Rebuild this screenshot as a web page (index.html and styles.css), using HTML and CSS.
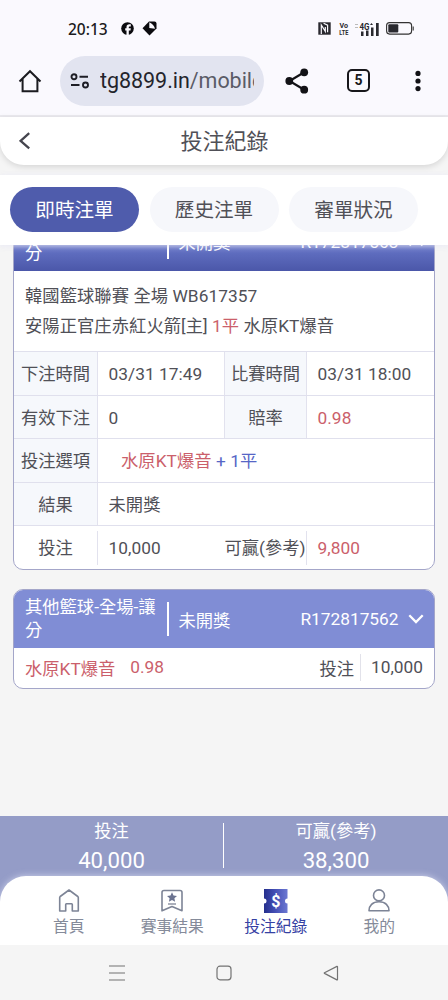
FILE: index.html
```html
<!DOCTYPE html>
<html lang="zh-Hant">
<head>
<meta charset="utf-8">
<meta name="viewport" content="width=device-width, initial-scale=1">
<title>投注紀錄</title>
<link rel="stylesheet" href="styles.css">
</head>
<body>
<div class="phone">
  <div class="status">
    <span class="clock">20:13</span>
    <svg class="fb" width="13" height="13" viewBox="0 0 13 13"><circle cx="6.5" cy="6.5" r="6.3" fill="#0b0b0f"/><path d="M5.500 13V8.400H4.200V6.300h1.300V5.100c0-1.900 1.100-2.800 2.800-2.800h1.500v2.100H8.800c-.8 0-1 .4-1 .9v1h2l-.3 2.100H7.800V13z" fill="#faf9fe"/></svg>
    <svg class="diamond" width="15" height="15" viewBox="0 0 15 15"><path d="M7 .6h5.500q2 0 2 2V7.500L7.500 14.500.5 7.300z" fill="#0b0b0f"/><path d="M7.300 1.200v5.800l5.700.8q-1-4.500-5.700-6.600z" fill="#faf9fe"/></svg>
    <span class="grow"></span>
    <svg class="nfc" width="13" height="13" viewBox="0 0 13 13"><path d="M.3.3h12.400v12.400H.3z" fill="#29292f"/><path d="M3.300 12V3l4 6.400V5M5.600 1.200l4 2V10.200" fill="none" stroke="#faf9fe" stroke-width="1.200"/></svg>
    <svg class="volte" width="12" height="16" viewBox="0 0 12 16" fill="#29292f" font-weight="700"><text x="1.500" y="7" font-size="7.500" textLength="8.500" lengthAdjust="spacingAndGlyphs">Vo</text><text x="1.300" y="14" font-size="7.500" textLength="9" lengthAdjust="spacingAndGlyphs">LTE</text></svg>
    <svg class="signal" width="25" height="14" viewBox="0 0 25 14"><g fill="#29292f"><rect x="6" y="9.500" width="2.500" height="4.500"/><rect x="11" y="8.500" width="2.500" height="5.500"/><rect x="16" y="5.500" width="2.500" height="8.500"/><rect x="21" y="1" width="2.700" height="13"/></g><g fill="#bbb"><rect x="0" y="2" width="3" height="1"/><rect x="0" y="5" width="3" height="1"/></g><text x="4.500" y="7.500" font-size="9" font-weight="700" fill="#29292f" textLength="10" lengthAdjust="spacingAndGlyphs">4G</text><path d="M15 3l1.500-2L18 3z" fill="#29292f"/></svg>
    <svg class="battery" width="28" height="13" viewBox="0 0 28 13"><rect x=".6" y=".6" width="25" height="11.500" rx="3" fill="none" stroke="#333" stroke-width="1.100"/><rect x="2.300" y="2.300" width="10" height="8.200" rx="1" fill="#29292f"/><path d="M27.200 4.500v4" stroke="#333" stroke-width="1.100"/></svg>
  </div>
  <div class="browser">
    <svg class="home" width="24" height="24" viewBox="0 0 24 24"><path d="M1.500 12.500 12 2.200l10.500 10.300M4.600 10v12.200h14.800V10" fill="none" stroke="#1b1b20" stroke-width="2"/></svg>
    <div class="url">
      <svg width="20" height="16" viewBox="0 0 20 16" fill="none" stroke="#1d1d25" stroke-width="1.900"><circle cx="4" cy="3.700" r="2.500"/><path d="M9.500 3.700h8.500M1 12h8.500"/><circle cx="15.500" cy="12" r="2.500"/></svg>
      <span class="addr">tg8899.in<span class="path">/mobile</span></span>
    </div>
    <svg class="share" width="24" height="26" viewBox="0 0 24 26"><path d="M19.200 4.300 4.500 13l14.700 8.700" fill="none" stroke="#121216" stroke-width="2.200"/><g fill="#121216"><circle cx="19.200" cy="4.300" r="3.900"/><circle cx="4.300" cy="13" r="3.900"/><circle cx="19.200" cy="21.700" r="3.900"/></g></svg>
    <span class="tabcount">5</span>
    <svg class="more" width="6" height="22" viewBox="0 0 6 22" fill="#121216"><circle cx="3" cy="3.400" r="2.600"/><circle cx="3" cy="11" r="2.600"/><circle cx="3" cy="18.600" r="2.600"/></svg>
  </div>

  <header class="title">
    <svg width="12" height="18" viewBox="0 0 12 18"><path d="M10.200 1.200 1.600 8.800l8.600 7.600" fill="none" stroke="#45454e" stroke-width="2.300"/></svg>
    <h1>投注紀錄</h1>
  </header>
  <nav class="tabs">
    <span class="tab on">即時注單</span><span class="tab">歷史注單</span><span class="tab">審單狀況</span>
  </nav>

  <main class="list">
    <section class="card first">
      <div class="head open">
        <span class="game">其他籃球-全場-讓分</span><span class="bar"></span><span>未開獎</span>
        <span class="no">R172817563</span>
        <svg width="16" height="10" viewBox="0 0 16 10"><path d="M1.500 8.500 8 2l6.500 6.500" fill="none" stroke="#fff" stroke-width="2.200"/></svg>
      </div>
      <div class="match">
        <div>韓國籃球聯賽 全場 WB617357</div>
        <div>安陽正官庄赤紅火箭[主] <span class="red">1平</span> 水原KT爆音</div>
      </div>
      <div class="row"><span class="label">下注時間</span><span class="val">03/31 17:49</span><span class="label second">比賽時間</span><span class="val">03/31 18:00</span></div>
      <div class="row"><span class="label">有效下注</span><span class="val">0</span><span class="label second">賠率</span><span class="val red">0.98</span></div>
      <div class="row wide"><span class="label">投注選項</span><span class="val pick"><span class="red">水原KT爆音</span> <span class="blue">+ 1平</span></span></div>
      <div class="row wide"><span class="label">結果</span><span class="val">未開獎</span></div>
      <div class="row sum"><span class="label">投注</span><span class="val">10,000</span><span class="label second">可贏(參考)</span><span class="val red">9,800</span></div>
    </section>
    <section class="card">
      <div class="head">
        <span class="game">其他籃球-全場-讓分</span><span class="bar"></span><span>未開獎</span>
        <span class="no">R172817562</span>
        <svg width="16" height="10" viewBox="0 0 16 10"><path d="M1.300 1.300 8 8l6.700-6.700" fill="none" stroke="#fff" stroke-width="2.300"/></svg>
      </div>
      <div class="brief"><span class="red">水原KT爆音</span><span class="red odds">0.98</span><span class="stake">投注</span><span class="amount">10,000</span></div>
    </section>
  </main>

  <footer class="bottom">
    <div class="totals">
      <div class="total"><span>投注</span><b>40,000</b></div>
      <div class="total"><span>可贏(參考)</span><b>38,300</b></div>
    </div>
    <nav class="menu">
      <span class="item"><svg width="24" height="26" viewBox="0 0 24 26" fill="none" stroke="#7d8496" stroke-width="1.600" stroke-linejoin="round"><path d="M2.700 9.600Q2.700 9 3.200 8.500L12 2l8.800 6.500q.5.500.5 1.100V23h-6v-6.500q0-.7-.7-.7H9.400q-.7 0-.7.7V23h-6z"/></svg>首頁</span>
      <span class="item"><svg width="24" height="26" viewBox="0 0 24 26"><path d="M4 2.500h16q2 0 2 2V22.800L12 18.500 2 22.800v-18.300q0-2 2-2z" fill="none" stroke="#7d8496" stroke-width="1.600" stroke-linejoin="round"/><path d="m12 4.300 1.500 3.200 3.500.4-2.600 2.400.7 3.500-3.100-1.700-3.100 1.700.7-3.500L7 7.900l3.500-.4z" fill="#6b7390"/><path d="M8 16h8" stroke="#7d8496" stroke-width="1.300"/></svg>賽事結果</span>
      <span class="item on"><svg width="24" height="26" viewBox="0 0 24 26"><defs><linearGradient id="ticket"><stop offset="0" stop-color="#252f8c"/><stop offset=".45" stop-color="#424db4"/><stop offset="1" stop-color="#6c78d2"/></linearGradient></defs><path d="M0 1h23.500v9.500q-2.500 0-2.500 2.500t2.500 2.500V25H0v-9.500q2.500 0 2.500-2.500T0 10.500z" fill="url(#ticket)"/><text x="11.800" y="18.500" font-size="16" font-weight="700" text-anchor="middle" fill="#fff">$</text></svg>投注紀錄</span>
      <span class="item"><svg width="24" height="26" viewBox="0 0 24 26" fill="none" stroke="#7d8496" stroke-width="1.600" stroke-linejoin="round"><circle cx="12" cy="7.400" r="5.500"/><path d="M2 22.800c0-5 3.500-9 10-9s10 4 10 9z"/></svg>我的</span>
    </nav>
  </footer>
  <div class="system">
    <svg width="16" height="18" viewBox="0 0 16 18" stroke="#737373" stroke-width="1.200"><path d="M0 2h16M0 9h16M0 16h16"/></svg>
    <svg width="16" height="16" viewBox="0 0 16 16"><rect x="1" y="1.200" width="14" height="13.600" rx="3" fill="none" stroke="#737373" stroke-width="1.200"/></svg>
    <svg width="16" height="16" viewBox="0 0 16 16"><path d="M14.500 1.800v12.800q0 .6-.6.300L1.500 8.400q-.5-.3 0-.6L13.900 1.400q.6-.2.6.4z" fill="none" stroke="#737373" stroke-width="1.200"/></svg>
  </div>
</div>
</body>
</html>
```

FILE: styles.css
```css
* { box-sizing: border-box; }
body {
  margin: 0;
  font-family: Roboto, "Noto Sans CJK TC", sans-serif;
  font-size: 17.300px;
  color: #505057;
}
svg { display: block; flex: none; }
.phone {
  width: 448px;
  height: 1000px;
  display: flex;
  flex-direction: column;
  overflow: hidden;
  background: #f5f5f5;
  white-space: nowrap;
}
.red { color: #cb5f6b; }
.blue { color: #5666c6; }

.status {
  height: 50px;
  padding: 7px 34px 0 68px;
  display: flex;
  align-items: center;
  background: #faf9fe;
  flex: none;
}
.clock { width: 53px; font: 500 15.500px "Noto Sans", sans-serif; color: #1b1b20; }
.diamond { margin-left: 8px; }
.grow { flex: 1; }
.volte { margin: 0 5px 0 7px; }
.battery { margin-left: 6px; }

.browser {
  height: 67px;
  padding: 5px 27px 9px 18px;
  display: flex;
  align-items: center;
  background: #faf9fe;
  border-bottom: 2px solid #ebeaef;
  flex: none;
}
.url {
  width: 204px;
  height: 50px;
  margin-left: 18px;
  padding: 0 10px;
  display: flex;
  align-items: center;
  gap: 10px;
  border-radius: 25px;
  background: #e2e4f0;
}
.addr {
  width: 155px;
  overflow: hidden;
  font-size: 21.500px;
  letter-spacing: -.05px;
  line-height: 32px;
  padding-top: 1px;
  color: #24242c;
}
.path { color: #5a5b67; }
.share { margin-left: 21px; }
.tabcount {
  width: 23px;
  height: 23px;
  margin-left: 38px;
  border: 2.200px solid #17171b;
  border-radius: 5px;
  font: 700 14px/19px Roboto, sans-serif;
  text-align: center;
  color: #17171b;
}
.more { margin-left: auto; }

.title {
  height: 48px;
  padding: 0 20px 0 19px;
  display: grid;
  grid-template-columns: 12px 1fr 12px;
  align-items: center;
  background: #fff;
  border-radius: 0 0 24px 24px;
  box-shadow: 0 2px 6px rgba(0, 0, 0, .13);
  flex: none;
}
.title h1 {
  margin: 0;
  padding: 2px 0 0 2px;
  text-align: center;
  font-size: 22px;
  font-weight: 400;
  line-height: 30px;
}
.tabs {
  height: 70px;
  margin-top: 10px;
  padding: 12px 10px;
  display: flex;
  gap: 10.500px;
  background: #fff;
  flex: none;
  z-index: 1;
  box-shadow: 0 1px 6px rgba(232, 232, 245, .9);
}
.tab {
  width: 129px;
  height: 45px;
  border-radius: 23px;
  background: #f6f7fb;
  font-size: 19.600px;
  line-height: 48px;
  text-align: center;
}
.tab.on { background: #4f5cac; color: #fff; }

.list {
  height: 571px;
  padding: 0 13px;
  overflow: hidden;
  flex: none;
}
.card {
  margin-bottom: 19.500px;
  border: 1px solid #a4a6c9;
  border-radius: 10px;
  overflow: hidden;
  background: #fff;
}
.card.first { margin-top: -34px; }
.head {
  height: 58px;
  padding: 0 10px 0 11px;
  display: flex;
  align-items: center;
  background: #808dd5;
  color: #fff;
}
.head.open { height: 59px; background: linear-gradient(#808dd5 15%, #6473c5 60%, #4b57a9); }
.game { width: 132px; white-space: normal; line-height: 23.500px; }
.bar { width: 2.500px; height: 34px; margin: 0 9.500px; background: #fff; }
.no { margin: 0 9.500px 0 auto; }
.match { height: 80px; padding: 11px 11px 10px; line-height: 29.500px; letter-spacing: .06px; }
.row {
  height: 43.600px;
  display: grid;
  grid-template-columns: 84px 126px 83px 1fr;
  grid-template-rows: 42.600px;
  border-top: 1px solid #e0e0ed;
  line-height: 44px;
}
.row.wide { grid-template-columns: 84px 1fr; }
.row > span { height: 42.600px; }
.label {
  text-align: center;
  background: #f6f8fc;
  border-right: 1px solid #e2e2ee;
}
.label.second { border-left: 1px solid #e2e2ee; }
.val { padding-left: 10.500px; letter-spacing: .05px; }
.val.pick { padding-left: 23px; }
.row.sum > .label {
  height: 34px;
  margin-top: 5px;
  line-height: 34.500px;
  background: none;
}
.row.sum > .second { border-left: 0; }
.brief {
  height: 39.500px;
  padding: 0 11px 2px;
  display: flex;
  align-items: center;
}
.odds { margin-left: 15px; }
.stake { margin-left: auto; }
.amount {
  margin-left: 6px;
  padding-left: 10px;
  border-left: 1px solid #e2e2ea;
  line-height: 27px;
}

.bottom { height: 129px; background: #949cc7; flex: none; overflow: hidden; }
.totals { height: 59.500px; padding-top: 3px; display: grid; grid-template-columns: 223px 1fr; }
.total {
  height: 54px;
  display: flex;
  flex-direction: column;
  align-items: center;
  color: #fff;
  line-height: 24px;
}
.total b { font-size: 22.200px; font-weight: 400; line-height: 35px; }
.total + .total {
  border-left: 1px solid #fff;
  height: 45px;
  margin-top: 4px;
}
.total + .total span { margin-top: -4px; }
.menu {
  height: 70px;
  padding: 12px 17px 0;
  display: grid;
  grid-template-columns: repeat(4, 1fr);
  background: #fff;
  border-radius: 26px 26px 0 0;
  box-shadow: 0 0 7px rgba(230, 232, 250, .7);
}
.item {
  display: flex;
  flex-direction: column;
  align-items: center;
  font-size: 15.800px;
  line-height: 26px;
  color: #858b9a;
}
.item.on { color: #3541a3; }
.system {
  flex: 1;
  padding: 0 109px;
  display: flex;
  align-items: center;
  justify-content: space-between;
  background: #f5f5f5;
}
```
